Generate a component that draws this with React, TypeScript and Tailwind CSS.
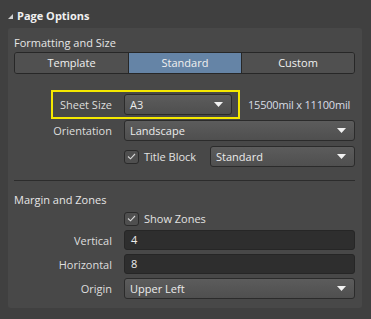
import React from 'react'

const font = { fontFamily: '"Open Sans", "Noto Sans", sans-serif' }

function Arrow() {
  return (
    <svg width="9" height="5" viewBox="0 0 9 5" className="shrink-0">
      <path d="M0 0h9L4.5 5z" fill="#f2f2f2" />
    </svg>
  )
}

function Dropdown({ value, className = '' }: { value: string; className?: string }) {
  return (
    <div
      className={`flex items-center justify-between h-[21px] pl-[5px] pr-[8px] rounded-[3px] border border-[#2b2b2b] bg-gradient-to-b from-[#5c5c5c] to-[#4f4f4f] text-[11px] text-[#ececec] ${className}`}
    >
      <span className="leading-none">{value}</span>
      <Arrow />
    </div>
  )
}

function Input({ value }: { value: string }) {
  return (
    <div className="flex items-center h-[20px] px-[6px] rounded-[3px] border border-[#262626] bg-[#2e2e2e] text-[11px] text-[#ececec]">
      {value}
    </div>
  )
}

function Check({ label }: { label: string }) {
  return (
    <div className="flex items-center gap-[5px]">
      <div className="w-[15px] h-[14px] rounded-[3px] border border-[#2a2a2a] bg-[#4f4f4f] flex items-center justify-center">
        <svg width="9" height="7" viewBox="0 0 9 7">
          <path d="M1 3.5l2.5 2.3L8 1" fill="none" stroke="#d8d8d8" strokeWidth="1.1" />
        </svg>
      </div>
      <span className="text-[11px] text-[#e2e2e2] leading-none">{label}</span>
    </div>
  )
}

function Label({ children }: { children: React.ReactNode }) {
  return <span className="text-[11px] text-[#dedede] text-right leading-none">{children}</span>
}

export default function App() {
  return (
    <div className="w-[371px] h-[319px] bg-[#404040] overflow-hidden" style={font}>
      {/* Header */}
      <div className="flex items-center h-[28px] pl-[8px] pt-[4px] gap-[4px]">
        <svg width="5" height="5" viewBox="0 0 5 5">
          <path d="M5 0v5H0z" fill="#d0d0d0" />
        </svg>
        <span className="text-[11px] font-bold text-[#f0f0f0]">Page Options</span>
      </div>

      {/* Panel */}
      <div className="ml-[8px] mr-[9px] h-[280px] bg-[#484848] rounded-[3px] pl-[6px] pr-[7px] pt-[7px]">
        <div className="h-[16px] flex items-center text-[11px] text-[#e6e6e6]">Formatting and Size</div>

        {/* Segmented */}
        <div className="mt-[1px] h-[22px] grid grid-cols-3 rounded-[3px] border border-[#272727] overflow-hidden text-[11px] text-[#f0f0f0]">
          <div className="flex items-center justify-center bg-[#505050]">Template</div>
          <div className="flex items-center justify-center bg-[#6584a6] border-l border-[#272727]">Standard</div>
          <div className="flex items-center justify-center bg-[#505050] border-l border-[#272727]">Custom</div>
        </div>

        <div className="mt-[20px] grid grid-cols-[98px_1fr] gap-x-[12px] gap-y-[5px] items-center">
          {/* Sheet size */}
          <div className="relative flex justify-end">
            <div className="absolute left-[37px] top-[-9px] w-[189px] h-[29px] border-2 border-[#f5e800]" />
            <Label>Sheet Size</Label>
          </div>
          <div className="flex items-center gap-[16px]">
            <Dropdown value="A3" className="w-[108px]" />
            <span className="text-[11px] tracking-[-0.2px] text-[#d8dde6] leading-none whitespace-nowrap">15500mil x 11100mil</span>
          </div>

          <Label>Orientation</Label>
          <Dropdown value="Landscape" />

          <div />
          <div className="flex items-center justify-between">
            <Check label="Title Block" />
            <Dropdown value="Standard" className="w-[145px]" />
          </div>
        </div>

        <div className="mt-[13px] h-px bg-[#2c2c2c]" />

        <div className="mt-[11px] h-[16px] flex items-center text-[11px] text-[#e6e6e6]">Margin and Zones</div>

        <div className="mt-[3px] grid grid-cols-[98px_1fr] gap-x-[12px] gap-y-[4px] items-center">
          <div />
          <div className="h-[15px] flex items-center">
            <Check label="Show Zones" />
          </div>

          <Label>Vertical</Label>
          <Input value="4" />

          <Label>Horizontal</Label>
          <Input value="8" />

          <Label>Origin</Label>
          <Dropdown value="Upper Left" className="h-[20px]" />
        </div>
      </div>
    </div>
  )
}
